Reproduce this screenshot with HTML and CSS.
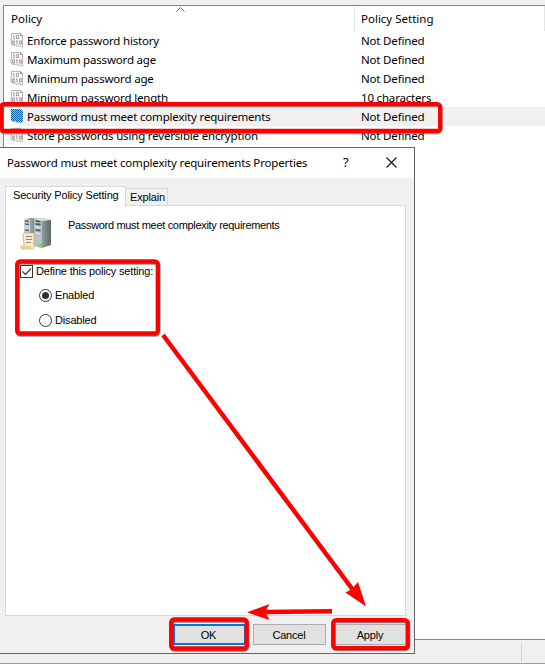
FILE: index.html
```
<!DOCTYPE html>
<html lang="en">
<head>
<meta charset="utf-8">
<title>Password Policy</title>
<link rel="stylesheet" href="styles.css">
</head>
<body>
<svg class="defs" width="0" height="0">
  <defs>
    <pattern id="dither" width="2" height="2" patternUnits="userSpaceOnUse">
      <rect width="2" height="2" fill="#8fb9dc"/><rect width="1" height="1" fill="#0f69b0"/><rect x="1" y="1" width="1" height="1" fill="#0f69b0"/>
    </pattern>
    <symbol id="policy" viewBox="0 0 14 16">
      <path d="M1.5 1.5h9l2 2v10l.5 1-2 .5-2-1.5-2 1-2-1.5-2 .5-2-1.5z" fill="#f8f8f8" stroke="#b5b5b5"/>
      <path d="M10.500 1.500v2h2M4 3.500v4M3 4h1" fill="none" stroke="#999"/>
      <rect x="6.500" y="3.500" width="2" height="3" fill="none" stroke="#aaa"/>
      <rect x="2.500" y="9" width="2" height="3" fill="none" stroke="#aaa"/>
      <path d="M7 8.500v4M6 9h1" fill="none" stroke="#999"/>
      <rect x="9.500" y="9" width="2" height="3" fill="none" stroke="#aaa"/>
    </symbol>
  </defs>
</svg>
<main class="window">
  <section class="list">
    <header class="head">
      <span class="name">Policy</span><span class="value">Policy Setting</span>
      <svg class="sort" width="9" height="5"><path d="M.5 4.500l4-4 4 4" fill="none" stroke="#666"/></svg>
    </header>
    <div class="row"><svg class="icon"><use href="#policy"/></svg><span class="name">Enforce password history</span><span class="value">Not Defined</span></div>
    <div class="row"><svg class="icon"><use href="#policy"/></svg><span class="name">Maximum password age</span><span class="value">Not Defined</span></div>
    <div class="row"><svg class="icon"><use href="#policy"/></svg><span class="name">Minimum password age</span><span class="value">Not Defined</span></div>
    <div class="row"><svg class="icon"><use href="#policy"/></svg><span class="name">Minimum password length</span><span class="value">10 characters</span></div>
    <div class="row selected"><svg class="icon" viewBox="0 0 14 16"><path d="M1 1h10l2 2v11l-2 1-2-1-2 1-2-2-2 1-2-2z" fill="url(#dither)"/></svg><span class="name">Password must meet complexity requirements</span><span class="value">Not Defined</span></div>
    <div class="row"><svg class="icon"><use href="#policy"/></svg><span class="name">Store passwords using reversible encryption</span><span class="value">Not Defined</span></div>
  </section>
  <footer class="status"><span class="pane"></span></footer>
</main>

<section class="dialog">
  <header class="titlebar">
    <h1>Password must meet complexity requirements Properties</h1>
    <span class="help">?</span>
    <svg class="close" width="11" height="11"><path d="M.5.5l10 10M10.500.5l-10 10" stroke="#111" stroke-width="1.100"/></svg>
  </header>
  <nav class="tabs"><span class="tab active">Security Policy Setting</span><span class="tab explain">Explain</span></nav>
  <div class="page">
    <div class="intro">
      <svg class="servers" width="34" height="34" viewBox="0 0 34 34">
        <defs><linearGradient id="side"><stop stop-color="#c5cccd"/><stop offset="1" stop-color="#59666a"/></linearGradient></defs>
        <path d="M4 2l7-1 9 1v25l-9 2-7-2z" fill="url(#side)"/><path d="M4 2l6 1v25l-6-1z" fill="#cbd3d6"/>
        <path d="M5 4l4 .5M5 7l4 .5M5 13l4 .5" stroke="#4e6170" stroke-width="1.500"/>
        <path d="M14 2l8-1 9 2v25l-9 3-8-2z" fill="url(#side)"/><path d="M14 2l8 1v28l-8-2z" fill="#b9c3c7"/>
        <path d="M15.500 4l5 .7M15.500 7l5 .7M15.500 13l5 .7" stroke="#43535e" stroke-width="1.700"/><path d="M15.500 10l5 .7M15.500 16l5 .7" stroke="#eef4f6"/>
        <path d="M14 2l8-1 9 2-9 1z" fill="#dce0e0"/>
        <rect x="19" y="27" width="3" height="2.500" fill="#5be500"/>
        <path d="M3 17q1-2 3-1h9q-1 1-1 3v11q0 2-2 2H2q-2-1-1-3h3z" fill="#f8ebbd" stroke="#c3a66e" stroke-width=".7"/>
        <path d="M1 29h10v3H2z" fill="#e6d294"/><path d="M6 19.500h6M6 22.500h6M6 25.500h5" stroke="#8e83a4"/>
      </svg>
      <span class="subject">Password must meet complexity requirements</span>
    </div>
    <label class="option define"><svg width="13" height="13"><rect x=".5" y=".5" width="12" height="12" fill="#fff" stroke="#333"/><path d="M2.500 6.500l3 3 5.500-6" fill="none" stroke="#333" stroke-width="1.200"/></svg><span>Define this policy setting:</span></label>
    <label class="option enabled"><svg width="13" height="13"><circle cx="6.500" cy="6.500" r="6" fill="#fff" stroke="#333"/><circle cx="6.500" cy="6.500" r="3.500" fill="#333"/></svg><span>Enabled</span></label>
    <label class="option disabled"><svg width="13" height="13"><circle cx="6.500" cy="6.500" r="6" fill="#fff" stroke="#333"/></svg><span>Disabled</span></label>
  </div>
  <div class="buttons"><span class="button ok">OK</span><span class="button cancel">Cancel</span><span class="button apply">Apply</span></div>
</section>

<svg class="marks" width="545" height="664">
  <g class="shadow" transform="translate(.5 1)"><rect x="1" y="104" width="439" height="27" rx="3"/><rect x="17" y="261.500" width="141" height="72" rx="3"/><rect x="171.200" y="619.500" width="75.500" height="29" rx="3"/><rect x="333.200" y="620" width="74.500" height="28" rx="3"/></g>
  <g class="frames"><rect x="1" y="104.200" width="439.200" height="26.700" rx="3"/><rect x="17.200" y="261.500" width="140.600" height="72" rx="3"/><rect x="171.200" y="619.500" width="75.500" height="29" rx="3"/><rect x="333.200" y="620.200" width="74.500" height="28" rx="3"/></g>
  <path class="shaft" d="M163 335L353 590M332 611.300L264 612"/>
  <path class="tip" d="M366 606.500L345.500 592.500L352 589L358 582ZM247 612.300L269.500 604L265 612L269.500 620Z"/>
</svg>
</body>
</html>
```

FILE: styles.css
```
* { box-sizing: border-box; }
body {
  margin: 0;
  width: 545px;
  height: 664px;
  overflow: hidden;
  position: relative;
  background: #f0f0f0;
  color: #000;
  font: 11.5px/19px "Noto Sans", "Open Sans", sans-serif;
  letter-spacing: -0.18px;
  white-space: nowrap;
}
.defs { position: absolute; }
.window { display: flex; flex-direction: column; height: 664px; padding: 5px 0 0 3px; border-bottom: 1px solid #a0a0a0; }
.list { height: 635px; background: #fff; border: 1px solid #828790; border-right: 0; }
.head { position: relative; display: flex; height: 25px; padding: 3px 0 0 7px; border-right: 1px solid #e5e5e5; letter-spacing: 0; }
.head .name { width: 343px; height: 21px; }
.head::after { content: ""; position: absolute; left: 350px; top: 1px; height: 24px; width: 1px; background: #e3e3e6; }
.sort { position: absolute; left: 172px; top: 1px; }
.row { display: flex; height: 19px; padding-left: 6px; line-height: 20px; }
.icon { width: 14px; height: 16px; margin-top: 1px; flex: none; }
.row .name { width: 334px; padding-left: 3px; }
.row .value { padding-left: 3px; }
.head .value { padding-left: 7px; }
.selected .name, .selected .value { background: #f0f0f0; }
.selected .value { flex: 1; }
.status { height: 23px; padding: 3px 0 0 518px; }
.pane { display: block; width: 1px; height: 19px; background: #d0d0d0; }

.dialog { position: absolute; left: 0; top: 147px; width: 415px; height: 507px; background: #f0f0f0; border: 1px solid #666; border-left: 0; }
.titlebar { display: flex; align-items: center; height: 30px; padding-left: 7px; background: #fff; }
h1 { margin: -1px 0 0; font: inherit; width: 336px; }
.help { width: 43px; font-size: 13px; margin-top: -2px; }
.close { margin-top: -2px; }
.tabs { display: flex; align-items: flex-end; height: 28px; padding: 7px 0 0 5px; }
.tab { height: 18px; border: 1px solid #d9d9d9; border-bottom: 0; }
.tabs, .page, .buttons { font: 11px/18px "Liberation Sans", Arial, sans-serif; letter-spacing: -0.17px; }
.active { width: 121px; height: 21px; line-height: 17px; background: #fff; padding-left: 7px; position: relative; margin-bottom: -1px; z-index: 1; }
.explain { width: 42px; border-left: 0; padding-left: 4px; line-height: 16px; }
.page { width: 401px; height: 411px; margin: -1px 0 0 5px; background: #fff; border: 1px solid #d9d9d9; }
.intro { display: flex; height: 56px; padding: 11px 0 0 14px; }
.subject { margin-left: 14px; margin-top: -1px; letter-spacing: -0.32px; }
.option { display: flex; align-items: center; height: 18px; }
.option span { margin-left: 3px; }
.define { margin-left: 14px; }
.enabled { margin: 6px 0 0 33px; }
.disabled { margin: 7px 0 0 33px; }
.buttons { display: flex; gap: 7px; padding: 8px 0 0 173px; }
.button { width: 73px; height: 21px; border: 1px solid #adadad; background: #e1e1e1; text-align: center; line-height: 20px; }
.ok { border: 2px solid #0078d7; line-height: 18px; padding-right: 2px; }
.cancel, .apply { padding-right: 1px; }
.apply { margin-left: 1px; }

.marks { position: absolute; left: 0; top: 0; }
.frames rect { fill: none; stroke: #fe0000; stroke-width: 4.300px; }
.shadow rect { fill: none; stroke: #555; stroke-opacity: .65; stroke-width: 4.300px; }
.shaft { stroke: #fe0000; stroke-width: 4.500px; fill: none; }
.tip { fill: #fe0000; }
```
